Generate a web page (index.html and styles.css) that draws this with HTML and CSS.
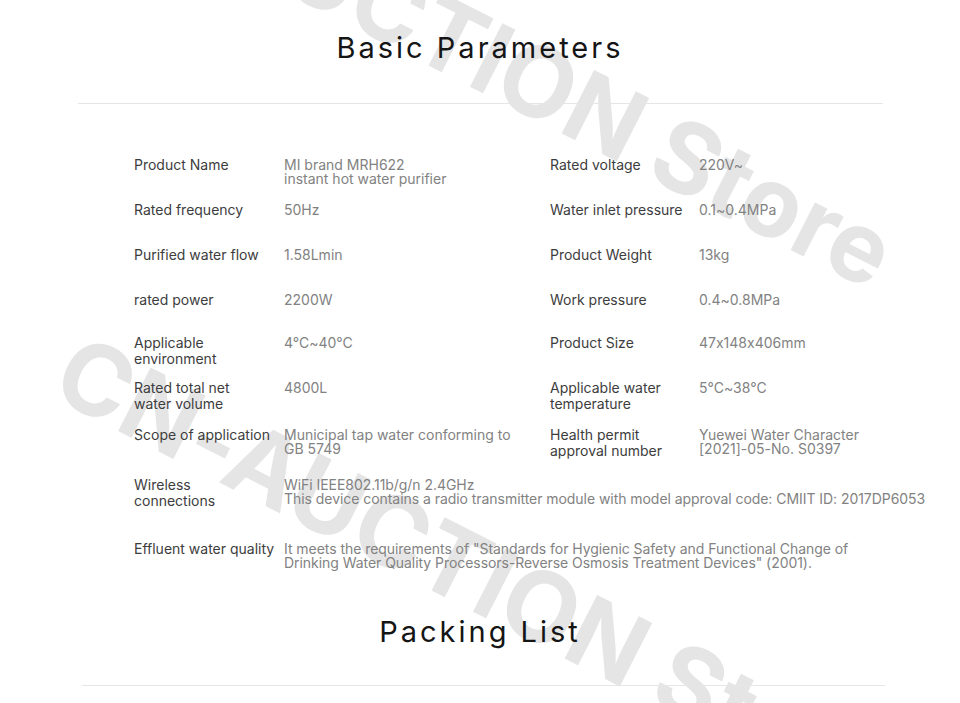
FILE: index.html
```html
<!DOCTYPE html>
<html lang="en">
<head>
<meta charset="utf-8">
<title>Basic Parameters</title>
<link rel="stylesheet" href="styles.css">
</head>
<body>
<div class="page">
  <svg class="watermark" width="960" height="703" viewBox="0 0 960 703" aria-hidden="true">
    <text x="45" y="-130" transform="rotate(27 45 -130)">CN-AUCTION Store</text>
    <text x="48" y="395" transform="rotate(27 48 395)">CN-AUCTION Store</text>
  </svg>

  <section class="section">
    <h1 class="title">Basic Parameters</h1>
    <hr class="rule">
    <div class="specs">
      <div class="lbl">Product Name</div>
      <div class="val">MI brand MRH622<br>instant hot water purifier</div>
      <div class="lbl">Rated voltage</div>
      <div class="val">220V~</div>

      <div class="lbl">Rated frequency</div>
      <div class="val">50Hz</div>
      <div class="lbl">Water inlet pressure</div>
      <div class="val">0.1~0.4MPa</div>

      <div class="lbl">Purified water flow</div>
      <div class="val">1.58Lmin</div>
      <div class="lbl">Product Weight</div>
      <div class="val">13kg</div>

      <div class="lbl">rated power</div>
      <div class="val">2200W</div>
      <div class="lbl">Work pressure</div>
      <div class="val">0.4~0.8MPa</div>

      <div class="lbl">Applicable<br>environment</div>
      <div class="val">4°C~40°C</div>
      <div class="lbl">Product Size</div>
      <div class="val">47x148x406mm</div>

      <div class="lbl">Rated total net<br>water volume</div>
      <div class="val">4800L</div>
      <div class="lbl">Applicable water<br>temperature</div>
      <div class="val">5°C~38°C</div>

      <div class="lbl">Scope of application</div>
      <div class="val">Municipal tap water conforming to<br>GB 5749</div>
      <div class="lbl">Health permit<br>approval number</div>
      <div class="val">Yuewei Water Character<br>[2021]-05-No. S0397</div>

      <div class="lbl">Wireless<br>connections</div>
      <div class="val wide">WiFi IEEE802.11b/g/n 2.4GHz<br>This device contains a radio transmitter module with model approval code: CMIIT ID: 2017DP6053</div>

      <div class="lbl">Effluent water quality</div>
      <div class="val wide">It meets the requirements of "Standards for Hygienic Safety and Functional Change of<br>Drinking Water Quality Processors-Reverse Osmosis Treatment Devices" (2001).</div>
    </div>
  </section>

  <section class="section section-pack">
    <h2 class="title title-pack">Packing List</h2>
    <hr class="rule rule-pack">
  </section>
</div>
</body>
</html>
```

FILE: styles.css
```css
html, body {
  margin: 0;
  padding: 0;
  background: #ffffff;
}

body {
  font-family: Inter, "Noto Sans", "DejaVu Sans", sans-serif;
  font-feature-settings: "calt" 0;
  color: #333;
  width: 960px;
  height: 703px;
  overflow: hidden;
}

.page {
  position: relative;
  width: 960px;
  height: 703px;
  overflow: hidden;
}

.watermark {
  position: absolute;
  left: 0;
  top: 0;
  z-index: 0;
  pointer-events: none;
}

.watermark text {
  font-family: Inter, "DejaVu Sans", sans-serif;
  font-weight: 700;
  font-size: 98px;
  fill: #e5e5e5;
}

.section {
  position: relative;
  z-index: 1;
  display: flex;
  flex-direction: column;
}

.title {
  margin: 30px 0 0;
  font-weight: 400;
  font-size: 29px;
  line-height: 36px;
  letter-spacing: 3px;
  text-align: center;
  color: #151515;
}

.rule {
  margin: 37px 0 0 78px;
  width: 805px;
  height: 1px;
  border: 0;
  background: #e6e6e6;
}

.specs {
  display: grid;
  grid-template-columns: 150px 266px 149px 1fr;
  grid-template-rows: 45px 45px 45px 43px 45px 47px 50px 64px 28px;
  padding: 53px 0 0 134px;
  font-size: 14px;
}

.lbl {
  color: #3d3d3d;
  line-height: 16px;
  white-space: nowrap;
}

.val {
  color: #828282;
  line-height: 14px;
  padding-top: 1px;
  white-space: nowrap;
}

.wide {
  grid-column: 2 / 5;
  letter-spacing: -0.05px;
}

.title-pack {
  margin-top: 45px;
  letter-spacing: 3px;
}

.rule-pack {
  margin: 35px 0 0 82px;
  width: 803px;
}
```
